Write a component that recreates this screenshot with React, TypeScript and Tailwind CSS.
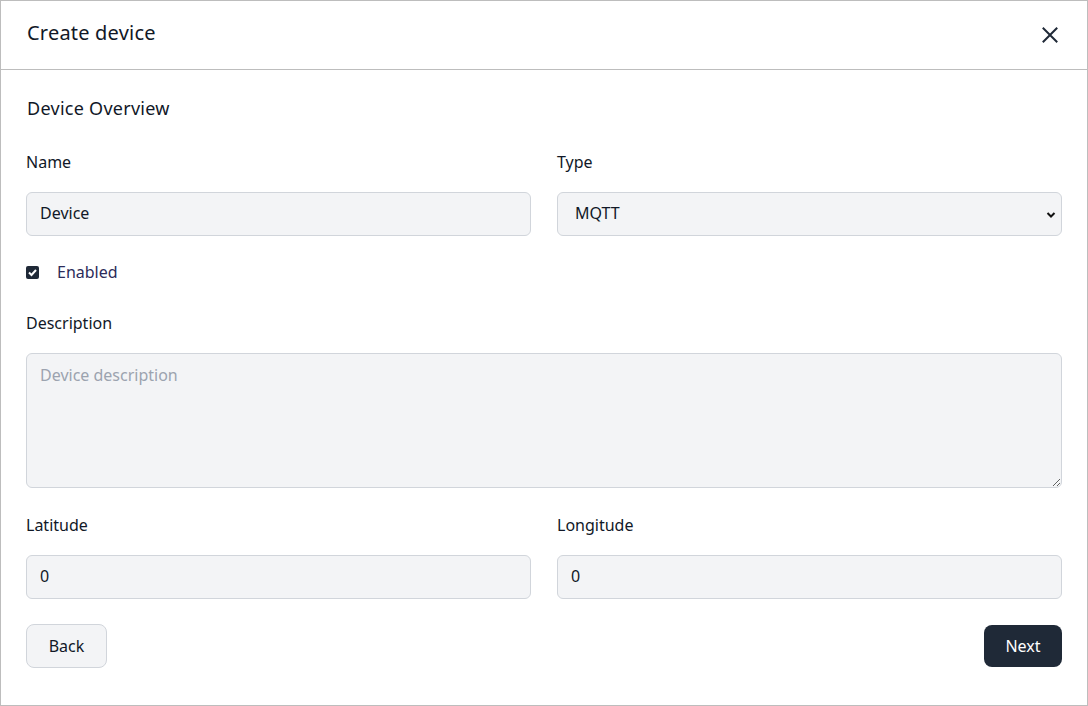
import React from "react";

export default function App() {
  const font = { fontFamily: '"Noto Sans", "Open Sans", sans-serif' };
  return (
    <div
      className="w-[1088px] h-[706px] bg-white border border-[#bdbdbd] flex flex-col text-[#111827]"
      style={font}
    >
      <div className="h-[69px] shrink-0 border-b border-[#bdbdbd] flex items-center justify-between pl-[26px] pr-[29px]">
        <div className="text-[20px] leading-[28px] -mt-[4px] tracking-[0.01em]">Create device</div>
        <svg width="16" height="16" viewBox="0 0 16 16" className="text-[#1f2937]">
          <path d="M1.5 1.5 L14.5 14.5 M14.5 1.5 L1.5 14.5" stroke="currentColor" strokeWidth="2" strokeLinecap="square" />
        </svg>
      </div>
      <div className="px-[25px] pt-[24px] flex flex-col">
        <div className="text-[18px] leading-[28px] pl-[1px] tracking-[0.015em]">Device Overview</div>
        <div className="grid grid-cols-2 gap-x-[26px] mt-[28px]">
          <div className="flex flex-col">
            <label className="text-[16px] leading-[24px]">Name</label>
            <input
              defaultValue="Device"
              className="mt-[18px] h-[44px] rounded-md border border-[#d1d5db] bg-[#f3f4f6] px-[13px] pb-[2px] text-[16px] outline-none"
              style={font}
            />
          </div>
          <div className="flex flex-col">
            <label className="text-[16px] leading-[24px]">Type</label>
            <div className="mt-[18px] relative h-[44px] rounded-md border border-[#d1d5db] bg-[#f3f4f6] flex items-center pl-[17px] pb-[2px] text-[16px]">
              MQTT
              <svg width="12" height="12" viewBox="0 0 12 12" className="absolute right-[4px] top-[16px]">
                <path d="M2.5 4 L6 7.5 L9.5 4" fill="none" stroke="#111" strokeWidth="2" />
              </svg>
            </div>
          </div>
        </div>
        <div className="mt-[24px] flex items-center h-[24px]">
          <span className="w-[13px] h-[13px] rounded-[2px] bg-[#1f2937] flex items-center justify-center">
            <svg width="11" height="11" viewBox="0 0 11 11">
              <path d="M2 5.5 L4.5 8 L9 3" fill="none" stroke="white" strokeWidth="2" />
            </svg>
          </span>
          <span className="ml-[18px] text-[16px] text-[#2c2c5a]">Enabled</span>
        </div>
        <label className="mt-[27px] text-[16px] leading-[24px]">Description</label>
        <textarea
          placeholder="Device description"
          className="mt-[18px] h-[135px] rounded-md border border-[#d1d5db] bg-[#f3f4f6] px-[13px] py-[9px] text-[16px] outline-none placeholder:text-[#9ca3af] resize-y"
          style={font}
        />
        <div className="grid grid-cols-2 gap-x-[26px] mt-[25px]">
          <div className="flex flex-col">
            <label className="text-[16px] leading-[24px]">Latitude</label>
            <input
              defaultValue="0"
              className="mt-[18px] h-[44px] rounded-md border border-[#d1d5db] bg-[#f3f4f6] px-[13px] pb-[2px] text-[16px] outline-none"
              style={font}
            />
          </div>
          <div className="flex flex-col">
            <label className="text-[16px] leading-[24px]">Longitude</label>
            <input
              defaultValue="0"
              className="mt-[18px] h-[44px] rounded-md border border-[#d1d5db] bg-[#f3f4f6] px-[13px] pb-[2px] text-[16px] outline-none"
              style={font}
            />
          </div>
        </div>
        <div className="mt-[25px] flex items-center justify-between">
          <button
            className="h-[44px] w-[81px] rounded-lg border border-[#d1d5db] bg-[#f3f4f6] text-[16px] text-[#111827]"
            style={font}
          >
            Back
          </button>
          <button
            className="h-[42px] w-[78px] rounded-lg bg-[#1f2937] text-[16px] text-white"
            style={font}
          >
            Next
          </button>
        </div>
      </div>
    </div>
  );
}
